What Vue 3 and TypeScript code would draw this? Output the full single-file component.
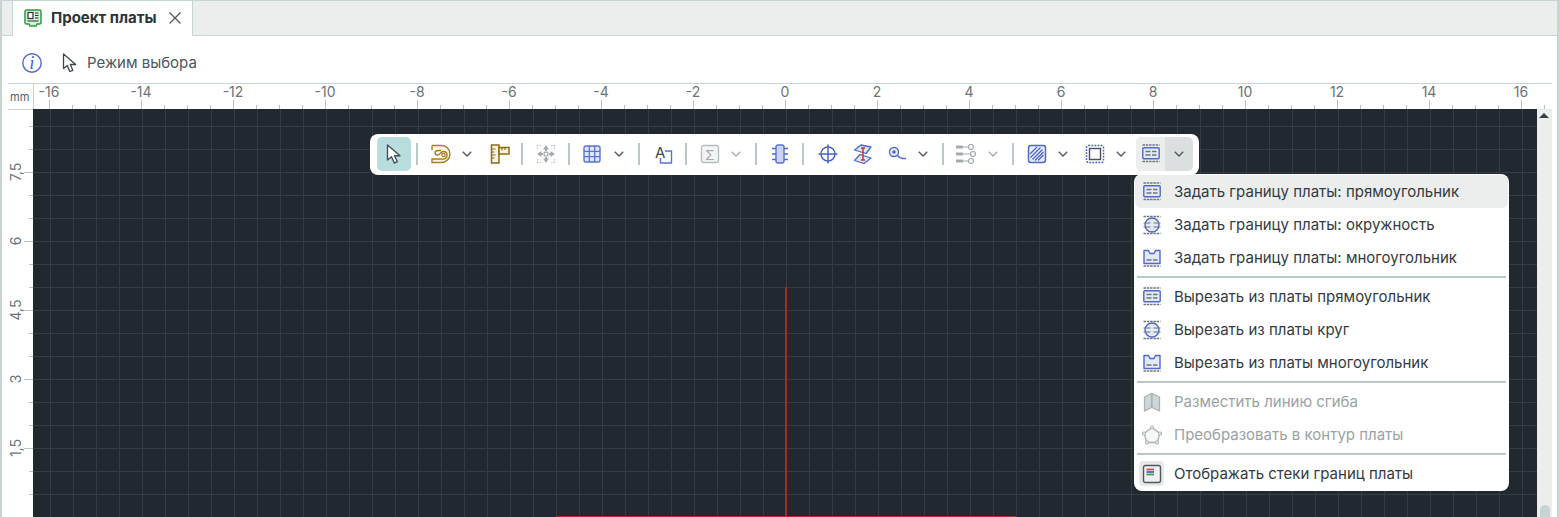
<script setup lang="ts">
const ORIGIN_X = 751
const STEP = 23

type Tick = { pos: number; major: boolean }
type Label = { pos: number; text: string }

const topTicks: Tick[] = []
for (let n = -32; n <= 33; n++) topTicks.push({ pos: ORIGIN_X + n * STEP, major: n % 4 === 0 })

const topLabels: Label[] = []
for (let v = -16; v <= 16; v += 2) topLabels.push({ pos: ORIGIN_X + v * 2 * STEP, text: String(v) })

const leftTicks: Tick[] = []
for (let n = 0; n < 18; n++) leftTicks.push({ pos: 17 + n * STEP, major: (n - 2) % 3 === 0 })

const leftLabels: Label[] = [
  { pos: 63, text: '7,5' },
  { pos: 132, text: '6' },
  { pos: 201, text: '4,5' },
  { pos: 270, text: '3' },
  { pos: 339, text: '1,5' }
]

type MenuRow = { text: string; icon: string; hover?: boolean; disabled?: boolean; boxed?: boolean; sep?: boolean }
const menuRows: MenuRow[] = [
  { text: 'Задать границу платы: прямоугольник', icon: 'b-rect', hover: true },
  { text: 'Задать границу платы: окружность', icon: 'b-circle' },
  { text: 'Задать границу платы: многоугольник', icon: 'b-poly', sep: true },
  { text: 'Вырезать из платы прямоугольник', icon: 'b-rect' },
  { text: 'Вырезать из платы круг', icon: 'b-circle' },
  { text: 'Вырезать из платы многоугольник', icon: 'b-poly', sep: true },
  { text: 'Разместить линию сгиба', icon: 'b-fold', disabled: true },
  { text: 'Преобразовать в контур платы', icon: 'b-penta', disabled: true, sep: true },
  { text: 'Отображать стеки границ платы', icon: 'b-stack', boxed: true }
]
</script>

<template>
  <div class="page">
    <svg class="defs" width="0" height="0" aria-hidden="true">
      <defs>
        <symbol id="b-rect" viewBox="0 0 20 20">
          <path d="M1.500 1h17M1.500 17.500h17" stroke="#6f777b" stroke-width="1.300" stroke-dasharray="2.500 .8" fill="none" />
          <rect x="1.800" y="3.700" width="16.400" height="11" rx="1" fill="#e3e9fb" stroke="#4f68d2" stroke-width="1.400" />
          <path d="M4.500 7.500h5M11 7.500h4.500M4.500 11h5M11 11h4.500" stroke="#6f777b" stroke-width="1.300" fill="none" />
        </symbol>
        <symbol id="b-circle" viewBox="0 0 20 20">
          <path d="M1.500 1.500h17M1.500 18.500h17" stroke="#6f777b" stroke-width="1.300" stroke-dasharray="2.500 .8" fill="none" />
          <circle cx="10" cy="10" r="7" fill="#e3e9fb" stroke="#4f68d2" stroke-width="1.400" />
          <path d="M1.500 8h7M11.500 8h7M1.500 12h7M11.500 12h7" stroke="#6f777b" stroke-width="1.200" fill="none" />
        </symbol>
        <symbol id="b-poly" viewBox="0 0 20 20">
          <path d="M1.500 18h17" stroke="#6f777b" stroke-width="1.300" stroke-dasharray="2.500 .8" fill="none" />
          <path d="M2 2.500h4.500l1.500 3h4l1.500-3H18V15.500H2z" fill="#e3e9fb" stroke="#4f68d2" stroke-width="1.400" stroke-linejoin="round" />
          <path d="M4.500 12h5M11 12h4.500" stroke="#6f777b" stroke-width="1.300" fill="none" />
        </symbol>
        <symbol id="b-fold" viewBox="0 0 20 20">
          <path d="M2.500 5 9.500 1.500v14L2.500 19zM10 1.500 17.500 5v14L10 15.500z" fill="#cfd6d7" stroke="#a9b3b4" stroke-width="1.300" stroke-linejoin="round" />
        </symbol>
        <symbol id="b-penta" viewBox="0 0 20 20">
          <path d="M10 2.500 18 8.500 15 17.500H5L2 8.500z" fill="#f5f6f6" stroke="#a9b3b4" stroke-width="1.300" />
          <g fill="#fff" stroke="#a9b3b4" stroke-width="1.200">
            <circle cx="10" cy="2.500" r="1.500" /><circle cx="18" cy="8.500" r="1.500" /><circle cx="15" cy="17.500" r="1.500" /><circle cx="5" cy="17.500" r="1.500" /><circle cx="2" cy="8.500" r="1.500" />
          </g>
        </symbol>
        <symbol id="b-stack" viewBox="0 0 20 20">
          <rect x="1.500" y="1.500" width="17" height="17" rx="2" fill="#eef0f0" stroke="#4f575c" stroke-width="1.400" />
          <path d="M4.500 5.500h7.500" stroke="#d04a4a" stroke-width="1.800" />
          <path d="M4.500 8h7.500" stroke="#4a62d0" stroke-width="1.800" />
          <path d="M4.500 10.500h7.500" stroke="#3fa14f" stroke-width="1.800" />
        </symbol>
        <symbol id="chev" viewBox="0 0 10 6">
          <path d="M.8.800 5 5l4.200-4.200" fill="none" stroke="currentColor" stroke-width="1.300" />
        </symbol>
      </defs>
    </svg>

    <div class="tabbar">
      <div class="tab">
        <svg class="tab-icon" viewBox="0 0 18 18" width="18" height="18">
          <path d="M2.500 1h13A1.500 1.500 0 0 1 17 2.500v11a1.500 1.500 0 0 1-1.500 1.500H13l-1 2H6l-1-2H2.500A1.500 1.500 0 0 1 1 13.500v-11A1.500 1.500 0 0 1 2.500 1z" fill="#d9f0d9" stroke="#2f9a3c" stroke-width="1.500" />
          <rect x="4" y="3.500" width="5" height="6" fill="#fff" stroke="#2d3338" stroke-width="1.200" />
          <path d="M11 4h3.500M11 6.500h3.500M11 9h3.500M3.500 12h11" stroke="#2d3338" stroke-width="1.200" fill="none" />
        </svg>
        <span class="tab-title">Проект платы</span>
        <svg class="tab-close" viewBox="0 0 12 12" width="12" height="12">
          <path d="M.5.500l11 11M11.500.500l-11 11" stroke="#555" stroke-width="1.200" fill="none" />
        </svg>
      </div>
    </div>

    <div class="inforow">
      <svg viewBox="0 0 20 20" width="20" height="20" class="info-icon">
        <circle cx="10" cy="10" r="9.200" fill="#fff" stroke="#4f68d2" stroke-width="1.400" />
        <text x="10" y="16" text-anchor="middle" class="info-i">i</text>
      </svg>
      <svg viewBox="0 0 16 20" width="16" height="20" class="mode-icon">
        <path d="M1.500 1v14.500l3.800-3 2.500 6 3-1.200-2.500-5.800h5.400z" fill="#fff" stroke="#3f474d" stroke-width="1.300" stroke-linejoin="round" />
      </svg>
      <span class="mode-text">Режим выбора</span>
    </div>

    <div class="ruler-row">
      <div class="corner">mm</div>
      <div class="top-ruler">
        <i v-for="t in topTicks" :key="t.pos" class="ttick" :class="{ major: t.major }" :style="{ left: t.pos + 'px' }"></i>
        <span v-for="l in topLabels" :key="l.pos" class="tlabel" :style="{ left: l.pos + 'px' }">{{ l.text }}</span>
      </div>
    </div>

    <div class="work">
      <div class="left-ruler">
        <i v-for="t in leftTicks" :key="t.pos" class="ltick" :class="{ major: t.major }" :style="{ top: t.pos + 'px' }"></i>
        <span v-for="l in leftLabels" :key="l.pos" class="llabel" :style="{ top: l.pos + 'px' }">{{ l.text }}</span>
      </div>

      <div class="canvas">
        <div class="red-v"></div>
        <div class="red-h"></div>

        <div class="toolbar">
          <button class="btn active">
            <svg viewBox="0 0 20 20" width="20" height="20"><path d="M3.500 1v15l4-3.300 2.800 6.300 3-1.300-2.800-6h5.500z" fill="#fff" stroke="#475055" stroke-width="1.400" stroke-linejoin="round" /></svg>
          </button>
          <i class="sep m5"></i>
          <button class="btn m6">
            <svg viewBox="0 0 20 20" width="20" height="20"><path d="M1 1.500h9.500A8.500 8.500 0 0 1 19 10v0a8.500 8.500 0 0 1-8.500 8.500H1V15h10.500c2.500 0 4.500-1.500 4.500-3.800S14.200 7.500 12.300 7.500c-2.600 0-3 3.500-5.600 3.500C5 11 4 10 4 8.800S5 6.500 7 6.500h3M1 1.500V6" fill="#fbf5e4" stroke="#a97d20" stroke-width="1.400" /><circle cx="12.500" cy="11" r="1.700" fill="#fff" stroke="#a97d20" stroke-width="1.200" /></svg>
          </button>
          <svg class="chev"><use href="#chev" /></svg>
          <button class="btn m7">
            <svg viewBox="0 0 20 20" width="20" height="20"><rect x="1.500" y="1" width="7.500" height="18" fill="#fbf5e4" stroke="#94690f" stroke-width="1.500" /><rect x="9" y="3.500" width="10" height="6.500" fill="#fbf5e4" stroke="#94690f" stroke-width="1.500" /><path d="M1.500 5h4M1.500 8h3M1.500 11h4M1.500 14h3M12 3.500v3M15 3.500V6" stroke="#94690f" stroke-width="1.200" fill="none" /></svg>
          </button>
          <i class="sep m4"></i>
          <button class="btn m6">
            <svg viewBox="0 0 20 20" width="20" height="20"><path d="M10 1 13 5.500h-2V7H9V5.500H7zM10 19 7 14.500h2V13h2v1.500h2zM1 10 5.500 7v2H7v2H5.500v2zM19 10 14.500 13v-2H13V9h1.500V7z" fill="#a3abad" /><rect x="8.200" y="8.200" width="3.600" height="3.600" fill="none" stroke="#a3abad" stroke-width="1.200" /><path d="M1 1.500h4M15 1.500h4M1 18.500h4M15 18.500h4M1.500 1v4M18.500 1v4M1.500 15v4M18.500 15v4" stroke="#bcc4c6" stroke-width="1.200" stroke-dasharray="1.500 1" fill="none" /></svg>
          </button>
          <i class="sep m5"></i>
          <button class="btn m5">
            <svg viewBox="0 0 20 20" width="20" height="20"><rect x="2" y="2" width="16" height="16" rx="2" fill="#dfe6fb" stroke="#5a72d6" stroke-width="1.400" /><path d="M7.300 2v16M12.700 2v16M2 7.300h16M2 12.700h16" stroke="#5a72d6" stroke-width="1.300" fill="none" /></svg>
          </button>
          <svg class="chev m1"><use href="#chev" /></svg>
          <i class="sep m10"></i>
          <button class="btn m7">
            <svg viewBox="0 0 20 20" width="20" height="20"><text x="1" y="13.500" class="icon-a">A</text><path d="M11 7h6.500v12H6.500v-5" fill="none" stroke="#5a72d6" stroke-width="1.400" stroke-linejoin="round" /></svg>
          </button>
          <i class="sep m4"></i>
          <button class="btn m6">
            <svg viewBox="0 0 20 20" width="20" height="20"><rect x="1.500" y="1.500" width="17" height="17" rx="2" fill="#f3f5f5" stroke="#b6bebf" stroke-width="1.400" /><text x="10" y="15.500" text-anchor="middle" class="icon-sigma">Σ</text></svg>
          </button>
          <svg class="chev off"><use href="#chev" /></svg>
          <i class="sep m10"></i>
          <button class="btn m6">
            <svg viewBox="0 0 20 20" width="20" height="20"><rect x="6" y="1" width="8" height="18" rx="2" fill="#c9d4f7" stroke="#5a72d6" stroke-width="1.400" /><path d="M2 4.500h4M14 4.500h4M2 10h4M14 10h4M2 15.500h4M14 15.500h4" stroke="#4f68d2" stroke-width="1.400" fill="none" /></svg>
          </button>
          <i class="sep m5"></i>
          <button class="btn m7">
            <svg viewBox="0 0 20 20" width="20" height="20"><circle cx="10" cy="10" r="7" fill="none" stroke="#4a62d0" stroke-width="1.500" /><path d="M10 .5v19M.5 10h19" stroke="#4a62d0" stroke-width="1.500" fill="none" /></svg>
          </button>
          <button class="btn m1">
            <svg viewBox="0 0 20 20" width="20" height="20"><path d="M1.500 6 8 1l10 2-5 6.500z" fill="#dfe6fb" stroke="#4f68d2" stroke-width="1.300" stroke-linejoin="round" /><path d="M7 10.500 18 14l-7 5.500-9.500-3z" fill="#dfe6fb" stroke="#4f68d2" stroke-width="1.300" stroke-linejoin="round" /><path d="M8 4h4M8 16h4M10 4v12" stroke="#c93535" stroke-width="1.500" fill="none" /></svg>
          </button>
          <button class="btn">
            <svg viewBox="0 0 20 20" width="20" height="20"><circle cx="7" cy="8" r="4.500" fill="#eef2fd" stroke="#4f68d2" stroke-width="1.400" /><circle cx="7" cy="8" r="1.800" fill="#4a62d0" /><path d="M10.500 11.500c1.500 2 3 3 5 3h3.500" fill="none" stroke="#4f68d2" stroke-width="1.400" /></svg>
          </button>
          <svg class="chev"><use href="#chev" /></svg>
          <i class="sep m10"></i>
          <button class="btn m5">
            <svg viewBox="0 0 20 20" width="20" height="20"><path d="M0 1.500h7v3H0zM0 8.500h7v3H0zM0 15.500h7v3H0z" fill="#a3abad" /><path d="M7 3h6M7 10h8M7 17h6" stroke="#a3abad" stroke-width="1.200" fill="none" /><g fill="#fff" stroke="#a3abad" stroke-width="1.200"><circle cx="15" cy="3" r="2.500" /><circle cx="17" cy="10" r="2.500" /><circle cx="15" cy="17" r="2.500" /></g></svg>
          </button>
          <svg class="chev off m1"><use href="#chev" /></svg>
          <i class="sep m10"></i>
          <button class="btn m6">
            <svg viewBox="0 0 20 20" width="20" height="20"><rect x="1.500" y="1.500" width="17" height="17" rx="2.500" fill="#e9eefc" stroke="#4f68d2" stroke-width="1.500" /><path d="M3 10 10 3M3.500 13.500 13.500 3.500M5.500 15.500 15.500 5.500M8 16.500l8.500-8.500M11 16.500l5.500-5.500" stroke="#4a62d0" stroke-width="1.200" fill="none" /></svg>
          </button>
          <svg class="chev"><use href="#chev" /></svg>
          <button class="btn m6">
            <svg viewBox="0 0 20 20" width="20" height="20"><rect x="1.500" y="1.500" width="17" height="17" rx="2" fill="none" stroke="#4a62d0" stroke-width="1.500" stroke-dasharray="1.800 1.200" /><rect x="4.500" y="4.500" width="11" height="11" fill="#fff" stroke="#4a5258" stroke-width="1.400" /></svg>
          </button>
          <svg class="chev"><use href="#chev" /></svg>
          <div class="split">
            <span class="split-main"><svg width="20" height="20"><use href="#b-rect" /></svg></span>
            <span class="split-arrow"><svg class="chev"><use href="#chev" /></svg></span>
          </div>
        </div>

        <div class="menu">
          <template v-for="row in menuRows" :key="row.text">
            <div class="row" :class="{ hover: row.hover, disabled: row.disabled }">
              <span class="row-icon" :class="{ boxed: row.boxed }">
                <svg width="20" height="20"><use :href="'#' + row.icon" /></svg>
              </span>
              <span class="row-text">{{ row.text }}</span>
            </div>
            <div v-if="row.sep" class="menu-sep"></div>
          </template>
        </div>
      </div>

      <div class="scroll">
        <i class="scroll-up"></i>
        <i class="scroll-thumb"></i>
      </div>
    </div>
  </div>
</template>

<style>
html,
body {
  margin: 0;
  background: #fff;
  overflow: hidden;
}
</style>

<style scoped>
.page {
  box-sizing: border-box;
  width: 1559px;
  height: 517px;
  overflow: hidden;
  border: 0 solid #c8d4d4;
  border-width: 1px 2px 0 2px;
  display: flex;
  flex-direction: column;
  background: #fff;
  font-family: Inter, "Noto Sans", sans-serif;
  color: #333b41;
}
.defs {
  position: absolute;
}
.tabbar {
  box-sizing: border-box;
  height: 35px;
  flex: none;
  background: #eceeee;
  border-bottom: 1px solid #c8d4d4;
  padding-left: 10px;
  display: flex;
}
.tab {
  box-sizing: border-box;
  width: 181px;
  height: 35px;
  background: #fff;
  border: 0 solid #c8d4d4;
  border-width: 0 1px;
  display: flex;
  align-items: center;
  padding: 0 0 2px 11px;
}
.tab-title {
  font-size: 15px;
  font-weight: 700;
  color: #2c3338;
  margin-left: 9px;
  white-space: nowrap;
}
.tab-close {
  margin-left: 12px;
}
.inforow {
  box-sizing: border-box;
  height: 47px;
  flex: none;
  display: flex;
  align-items: center;
  padding: 6px 0 0 20px;
}
.info-icon {
  flex: none;
}
.info-i {
  font-family: "Liberation Serif", serif;
  font-style: italic;
  font-size: 19px;
  fill: #4a62d0;
}
.mode-icon {
  margin-left: 20px;
  flex: none;
}
.mode-text {
  margin-left: 9px;
  font-size: 15px;
  color: #4c565e;
}
.ruler-row {
  flex: none;
  height: 26px;
  margin: 0 5px 0 6px;
  border-top: 1px solid #c8d4d4;
  box-sizing: border-box;
  display: flex;
}
.corner {
  box-sizing: border-box;
  width: 26px;
  flex: none;
  border-right: 1px solid #c8d4d4;
  font-size: 11px;
  color: #555e64;
  padding: 7px 0 0 2px;
  line-height: 13px;
}
.top-ruler {
  position: relative;
  flex: 1;
  overflow: hidden;
}
.ttick {
  position: absolute;
  bottom: 0;
  width: 1px;
  height: 4px;
  background: #b8c4c4;
}
.ttick.major {
  height: 9px;
}
.tlabel {
  position: absolute;
  top: 0;
  transform: translateX(-50%);
  font-size: 14px;
  line-height: 16px;
  color: #6a7479;
}
.work {
  flex: 1;
  min-height: 0;
  margin: 0 5px 0 6px;
  display: flex;
}
.left-ruler {
  position: relative;
  width: 25px;
  flex: none;
  box-sizing: border-box;
  border-top: 1px solid #c8d4d4;
}
.ltick {
  position: absolute;
  right: 0;
  width: 4px;
  height: 1px;
  margin-top: -1px;
  background: #b8c4c4;
}
.ltick.major {
  width: 9px;
}
.llabel {
  position: absolute;
  left: 8px;
  transform: translate(-50%, -50%) rotate(-90deg);
  font-size: 14px;
  line-height: 16px;
  color: #6a7479;
  margin-top: -1px;
  white-space: nowrap;
}
.canvas {
  position: relative;
  flex: 1;
  min-width: 0;
  overflow: hidden;
  background-color: #21282f;
  background-image:
    linear-gradient(to right, #353d44 1px, transparent 1px),
    linear-gradient(to bottom, #353d44 1px, transparent 1px);
  background-size: 23px 23px;
  background-position: 17px 17px;
}
.red-v {
  position: absolute;
  left: 752px;
  top: 178px;
  bottom: 0;
  width: 2px;
  background: #a62a2a;
}
.red-h {
  position: absolute;
  left: 523px;
  width: 460px;
  bottom: 0;
  height: 1px;
  background: #ad2a2a;
}
.toolbar {
  position: absolute;
  left: 337px;
  top: 25px;
  box-sizing: border-box;
  width: 829px;
  height: 41px;
  background: #fff;
  border-radius: 8px;
  padding: 3px 5px 4px 7px;
  display: flex;
  align-items: center;
}
.btn {
  flex: none;
  width: 34px;
  height: 34px;
  padding: 0;
  border: 0;
  border-radius: 5px;
  background: transparent;
  display: flex;
  align-items: center;
  justify-content: center;
}
.btn.active {
  background: #b9dcdc;
}
.sep {
  flex: none;
  width: 2px;
  height: 22px;
  background: #b9c8c8;
}
.chev {
  flex: none;
  width: 18px;
  height: 6px;
  color: #4c565e;
}
.chev.off {
  color: #a3abad;
}
.m1 { margin-left: 1px; }
.m3 { margin-left: 3px; }
.m4 { margin-left: 4px; }
.m5 { margin-left: 5px; }
.m6 { margin-left: 6px; }
.m7 { margin-left: 7px; }
.m8 { margin-left: 8px; }
.m10 { margin-left: 10px; }
.icon-a {
  font-family: Inter, sans-serif;
  font-size: 15px;
  fill: #3f474d;
}
.icon-sigma {
  font-family: "Liberation Sans", sans-serif;
  font-size: 15px;
  fill: #a3abad;
}
.split {
  margin-left: 6px;
  width: 57px;
  height: 34px;
  flex: none;
  display: flex;
  border-radius: 5px;
  overflow: hidden;
}
.split-main {
  width: 29px;
  background: #eceeee;
  display: flex;
  align-items: center;
  justify-content: center;
}
.split-arrow {
  width: 28px;
  background: #dcdfdf;
  display: flex;
  align-items: center;
  justify-content: center;
}
.menu {
  position: absolute;
  left: 1101px;
  top: 65px;
  box-sizing: border-box;
  width: 375px;
  height: 317px;
  background: #fff;
  border-radius: 8px;
  padding: 1px;
}
.row {
  height: 33px;
  display: flex;
  align-items: center;
  border-radius: 6px;
  font-size: 15px;
  color: #333b41;
}
.row.hover {
  background: #eceeee;
}
.row.disabled {
  color: #9aa2a5;
}
.row-icon {
  flex: none;
  width: 25px;
  height: 25px;
  margin-left: 4px;
  display: flex;
  align-items: center;
  justify-content: center;
  border-radius: 4px;
}
.row-icon svg {
  display: block;
}
.row-icon.boxed {
  background: #e6e9e9;
}
.row-text {
  margin-left: 10px;
  white-space: nowrap;
}
.menu-sep {
  height: 2px;
  margin: 2px 2px;
  background: #b9c8c8;
}
.scroll {
  position: relative;
  width: 15px;
  flex: none;
  background: #eceeee;
}
.scroll-up {
  position: absolute;
  left: 2px;
  top: 4px;
  width: 0;
  height: 0;
  border: 5px solid transparent;
  border-top: 0;
  border-bottom: 5px solid #3a4249;
}
.scroll-thumb {
  position: absolute;
  left: 3px;
  top: 396px;
  width: 10px;
  height: 40px;
  border-radius: 5px;
  background: #c8d4d4;
}
</style>
